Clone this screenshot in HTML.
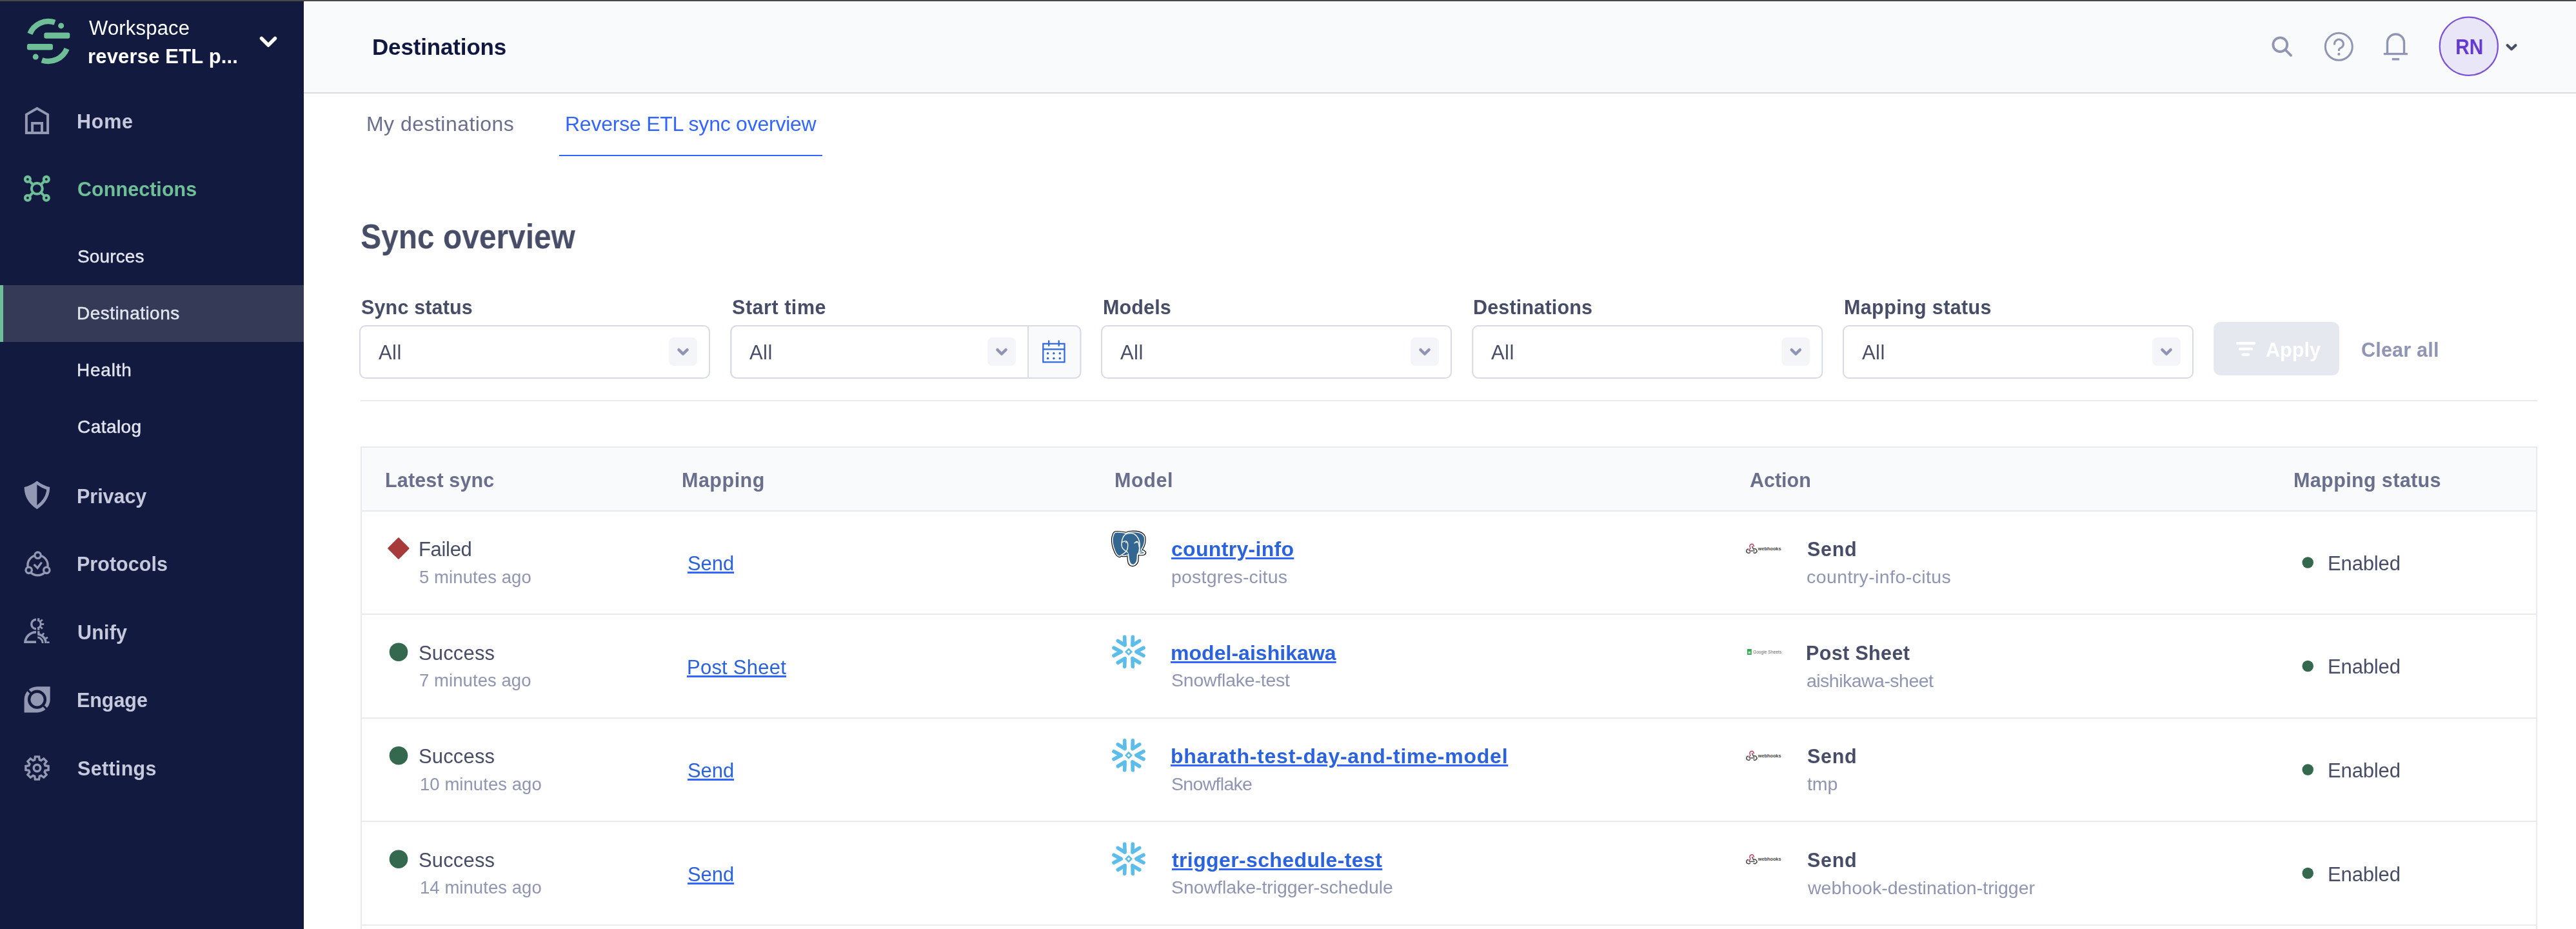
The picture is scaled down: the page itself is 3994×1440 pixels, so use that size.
<!DOCTYPE html>
<html><head><meta charset="utf-8"><title>Destinations</title>
<style>
html,body{margin:0;padding:0}
body{width:3994px;height:1440px;overflow:hidden;position:relative;background:#fff;font-family:"Liberation Sans",sans-serif}
.t{position:absolute;white-space:nowrap;will-change:transform}
svg.bg{position:absolute;left:0;top:0}
</style></head><body>
<svg class="bg" width="3994" height="1440" viewBox="0 0 3994 1440"><rect x="0" y="0" width="3994" height="1440" fill="#FFFFFF"/><rect x="471" y="2" width="3523" height="141" fill="#F9FAFC"/><rect x="471" y="143" width="3523" height="2" fill="#D8DAE5"/><rect x="0" y="2" width="471" height="1438" fill="#121A3F"/><rect x="0" y="0" width="3994" height="2" fill="#474747"/><rect x="867" y="240" width="408" height="2" fill="#3366FF"/><rect x="0" y="442" width="471" height="88" fill="#353B57"/><rect x="0" y="442" width="5" height="88" fill="#6EBF97"/><g fill="none" stroke="#6EBF97" stroke-width="8.5"><path d="M46.40,52.44 A30.85,30.85 0 0 1 85.04,34.83"/><path d="M103.60,75.56 A30.85,30.85 0 0 1 64.96,93.17"/></g><g fill="#6EBF97"><rect x="68.3" y="50.5" width="40" height="9.2" rx="3"/><rect x="41.9" y="68.1" width="40.1" height="9.3" rx="3"/><circle cx="94.7" cy="39.9" r="4.5"/><circle cx="55.2" cy="88.1" r="4.5"/></g><polyline points="405.5,59.5 416,70 426.5,59.5" fill="none" stroke="#FFFFFF" stroke-width="5.5" stroke-linecap="round" stroke-linejoin="round"/><g fill="none" stroke="#9398B3" stroke-width="4"><path d="M40.9,206 V177.6 L57.4,168 L74.1,177.6 V206 Z"/><path d="M50.1,206 V191 H65 V206"/></g><g fill="none" stroke="#6EBF97" stroke-width="4.1"><circle cx="57.35" cy="292.35" r="8.45"/><circle cx="42.9" cy="277.9" r="4"/><circle cx="71.8" cy="277.9" r="4"/><circle cx="42.9" cy="306.8" r="4"/><circle cx="71.8" cy="306.8" r="4"/><path d="M45.8,280.8 L51.4,286.4 M68.9,280.8 L63.3,286.4 M45.8,303.9 L51.4,298.3 M68.9,303.9 L63.3,298.3"/></g><path fill="#9398B3" fill-rule="evenodd" d="M57.35,745.4 Q48,752.5 37.7,755.1 Q37.5,776 57.35,789.3 Q77.2,776 77.2,755.1 Q66.7,752.5 57.35,745.4 Z M57.35,751.2 L57.35,783.2 Q71,773 72.2,759 Q64,756 57.35,751.2 Z"/><g fill="none" stroke="#9398B3" stroke-width="3.4"><circle cx="58.5" cy="876.2" r="15.6"/></g><g fill="#121A3F" stroke="#9398B3" stroke-width="3.3"><circle cx="58.6" cy="860.7" r="4.7"/><circle cx="44.7" cy="883.8" r="4.7"/><circle cx="72.3" cy="883.8" r="4.7"/></g><polyline points="52.6,874.8 58.2,880.4 64.6,871.6" fill="none" stroke="#9398B3" stroke-width="3.3"/><g fill="#9398B3"><path d="M56.00,958.50 A9.0,9.0 0 0 0 56.00,976.50 L56.00,973.10 A5.6,5.6 0 0 1 56.00,961.90 Z"/><path d="M58.19,975.01 A7.6,7.6 0 0 0 58.19,959.99 L57.74,962.86 A4.7,4.7 0 0 1 57.74,972.14 Z"/><rect x="64.00" y="966.15" width="4.20" height="2.7" transform="rotate(-38 57 967.5)"/><rect x="64.00" y="966.15" width="4.20" height="2.7" transform="rotate(0 57 967.5)"/><rect x="64.00" y="966.15" width="4.20" height="2.7" transform="rotate(38 57 967.5)"/><rect x="58.1" y="958.3" width="3.2" height="2.6"/><rect x="58.1" y="974.2" width="3.2" height="2.6"/><path d="M56.00,978.00 A19.0,19.0 0 0 0 37.00,997.00 L40.80,997.00 A15.2,15.2 0 0 1 56.00,981.80 Z"/><rect x="39" y="993.3" width="17" height="3.7"/><path d="M67.80,997.00 A10.8,10.8 0 0 0 58.50,986.31 L58.09,989.28 A7.8,7.8 0 0 1 64.80,997.00 Z"/><path d="M72.80,997.00 A15.8,15.8 0 0 0 58.51,981.27 L58.18,984.76 A12.3,12.3 0 0 1 69.30,997.00 Z"/><rect x="58.1" y="978.2" width="3.4" height="5"/><rect x="72.00" y="995.60" width="4.20" height="2.8" transform="rotate(-55 57 997)"/><rect x="72.00" y="995.60" width="4.20" height="2.8" transform="rotate(-28 57 997)"/><rect x="73" y="994.4" width="3.6" height="2.6"/></g><path fill="#9398B3" d="M77.7,1064.2 V1084.3 A20.1,20.1 0 0 1 57.6,1104.4 H37.6 V1084.3 A20.1,20.1 0 0 1 57.7,1064.2 Z"/><circle cx="57.5" cy="1084.2" r="12.4" fill="none" stroke="#121A3F" stroke-width="4.4"/><path d="M37,1063.6 L47.5,1074.2 M67.5,1094.2 L78,1104.8" stroke="#121A3F" stroke-width="3.2"/><path d="M61.31,1177.90 L60.55,1172.90 L54.45,1172.90 L53.69,1177.90 L51.29,1178.89 L47.21,1175.90 L42.90,1180.21 L45.89,1184.29 L44.90,1186.69 L39.90,1187.45 L39.90,1193.55 L44.90,1194.31 L45.89,1196.71 L42.90,1200.79 L47.21,1205.10 L51.29,1202.11 L53.69,1203.10 L54.45,1208.10 L60.55,1208.10 L61.31,1203.10 L63.71,1202.11 L67.79,1205.10 L72.10,1200.79 L69.11,1196.71 L70.10,1194.31 L75.10,1193.55 L75.10,1187.45 L70.10,1186.69 L69.11,1184.29 L72.10,1180.21 L67.79,1175.90 L63.71,1178.89 Z" fill="none" stroke="#9398B3" stroke-width="3.4" stroke-linejoin="miter"/><circle cx="57.5" cy="1190.5" r="5.2" fill="none" stroke="#9398B3" stroke-width="3.5"/><g fill="none" stroke="#8F95B2" stroke-width="3.8" stroke-linecap="round"><circle cx="3535.3" cy="69.2" r="10.9"/><path d="M3544.5,78.4 L3552,85.9"/></g><g fill="none" stroke="#8F95B2" stroke-width="3"><circle cx="3626.3" cy="72.3" r="21"/><path d="M3619.5,69.6 V68.05 A6.95,6.95 0 1 1 3630.9,73.4 Q3626.4,75.6 3626.4,77.2 V78.9"/></g><circle cx="3626.4" cy="83.9" r="2.1" fill="#8F95B2"/><g fill="none" stroke="#8F95B2" stroke-width="3.4"><path d="M3701.5,82 V66 A13,13 0 0 1 3727.5,66 V82"/></g><rect x="3695.8" y="81.9" width="37.1" height="3.3" fill="#8F95B2"/><rect x="3708.8" y="90.1" width="11.3" height="3.4" fill="#8F95B2"/><circle cx="3827.8" cy="71.7" r="45.1" fill="#E8E6F7" stroke="#7B52D6" stroke-width="2.2"/><polyline points="3887.6,70.2 3894,76.3 3900.4,70.2" fill="none" stroke="#474D66" stroke-width="4.2" stroke-linecap="round" stroke-linejoin="round"/><rect x="558" y="505" width="542" height="81" rx="9" fill="#FFFFFF" stroke="#D8DAE5" stroke-width="2"/><rect x="1037" y="523" width="44" height="44" rx="8" fill="#F4F5F9"/><polyline points="1052.4,542.2 1059.0,548.6 1065.6,542.2" fill="none" stroke="#8F95B2" stroke-width="4.4" stroke-linecap="round" stroke-linejoin="round"/><rect x="1133.3" y="505" width="542" height="81" rx="9" fill="#FFFFFF" stroke="#D8DAE5" stroke-width="2"/><path d="M1594,505 H1666.3 A9,9 0 0 1 1675.3,514 V577 A9,9 0 0 1 1666.3,586 H1594 Z" fill="#F9FAFC"/><rect x="1133.3" y="505" width="542" height="81" rx="9" fill="none" stroke="#D8DAE5" stroke-width="2"/><rect x="1593" y="505" width="2" height="81" fill="#D8DAE5"/><rect x="1531" y="523" width="44" height="44" rx="8" fill="#F4F5F9"/><polyline points="1546.4,542.2 1553.0,548.6 1559.6,542.2" fill="none" stroke="#8F95B2" stroke-width="4.4" stroke-linecap="round" stroke-linejoin="round"/><g fill="none" stroke="#2E67DA" stroke-width="2.2"><rect x="1617.3" y="532.8" width="33.2" height="28.5"/><path d="M1617.3,541.4 H1650.5 M1626.2,527.6 V536.8 M1641.7,527.6 V536.8"/></g><g fill="#2E67DA"><circle cx="1624.6" cy="547.7" r="1.7"/><circle cx="1624.6" cy="555.5" r="1.7"/><circle cx="1633.9" cy="547.7" r="1.7"/><circle cx="1633.9" cy="555.5" r="1.7"/><circle cx="1643.3" cy="547.7" r="1.7"/><circle cx="1643.3" cy="555.5" r="1.7"/></g><rect x="1708" y="505" width="542" height="81" rx="9" fill="#FFFFFF" stroke="#D8DAE5" stroke-width="2"/><rect x="2187" y="523" width="44" height="44" rx="8" fill="#F4F5F9"/><polyline points="2202.4,542.2 2209.0,548.6 2215.6,542.2" fill="none" stroke="#8F95B2" stroke-width="4.4" stroke-linecap="round" stroke-linejoin="round"/><rect x="2283.3" y="505" width="542" height="81" rx="9" fill="#FFFFFF" stroke="#D8DAE5" stroke-width="2"/><rect x="2762.3" y="523" width="44" height="44" rx="8" fill="#F4F5F9"/><polyline points="2777.7,542.2 2784.3,548.6 2790.9,542.2" fill="none" stroke="#8F95B2" stroke-width="4.4" stroke-linecap="round" stroke-linejoin="round"/><rect x="2858" y="505" width="542" height="81" rx="9" fill="#FFFFFF" stroke="#D8DAE5" stroke-width="2"/><rect x="3337" y="523" width="44" height="44" rx="8" fill="#F4F5F9"/><polyline points="3352.4,542.2 3359.0,548.6 3365.6,542.2" fill="none" stroke="#8F95B2" stroke-width="4.4" stroke-linecap="round" stroke-linejoin="round"/><rect x="3432.5" y="499.5" width="194" height="82" rx="10" fill="#E6E8F0" stroke="#EAEBF1" stroke-width="1"/><g stroke="#FFFFFF" stroke-width="4.3" stroke-linecap="round"><path d="M3469,532.1 H3495.2 M3473.2,540.9 H3490.9 M3477.5,549.7 H3486.2"/></g><rect x="559" y="620" width="3375" height="2" fill="#E9EAF0"/><rect x="561" y="694" width="3371" height="97" fill="#F9FAFC"/><rect x="559" y="692" width="3375" height="2" fill="#E9EAF0"/><rect x="559" y="692" width="2" height="748" fill="#E9EAF0"/><rect x="3932" y="692" width="2" height="748" fill="#E9EAF0"/><rect x="559" y="791" width="3375" height="2" fill="#E9EAF0"/><rect x="559" y="951" width="3375" height="2" fill="#E9EAF0"/><rect x="559" y="1112" width="3375" height="2" fill="#E9EAF0"/><rect x="559" y="1272" width="3375" height="2" fill="#E9EAF0"/><rect x="559" y="1433" width="3375" height="2" fill="#E9EAF0"/><path d="M1726.10,829.70 C1726.70,827.95 1727.27,826.42 1728.40,825.60 C1729.53,824.78 1730.75,824.80 1732.90,824.80 C1735.05,824.80 1739.15,825.33 1741.30,825.60 C1743.45,825.87 1744.18,826.53 1745.80,826.40 C1747.42,826.27 1748.83,825.12 1751.00,824.80 C1753.17,824.48 1756.43,824.43 1758.80,824.50 C1761.17,824.57 1763.17,824.65 1765.20,825.20 C1767.23,825.75 1769.48,826.62 1771.00,827.80 C1772.52,828.98 1773.70,830.37 1774.30,832.30 C1774.90,834.23 1774.82,837.15 1774.60,839.40 C1774.38,841.65 1773.83,843.60 1773.00,845.80 C1772.17,848.00 1769.60,851.20 1769.60,852.60 C1769.60,854.00 1772.05,853.57 1773.00,854.20 C1773.95,854.83 1775.20,855.63 1775.30,856.40 C1775.40,857.17 1774.63,858.30 1773.60,858.80 C1772.57,859.30 1770.60,859.33 1769.10,859.40 C1767.60,859.47 1765.47,858.77 1764.60,859.20 C1763.73,859.63 1764.12,860.13 1763.90,862.00 C1763.68,863.87 1763.95,868.25 1763.30,870.40 C1762.65,872.55 1761.40,873.93 1760.00,874.90 C1758.60,875.87 1756.40,876.42 1754.90,876.20 C1753.40,875.98 1751.87,874.90 1751.00,873.60 C1750.13,872.30 1750.02,870.33 1749.70,868.40 C1749.38,866.47 1749.35,863.37 1749.10,862.00 C1748.85,860.63 1748.97,860.32 1748.20,860.20 C1747.43,860.08 1745.75,861.12 1744.50,861.30 C1743.25,861.48 1741.68,861.42 1740.70,861.30 C1739.72,861.18 1739.42,860.43 1738.60,860.60 C1737.78,860.77 1736.93,862.43 1735.80,862.30 C1734.67,862.17 1733.00,861.18 1731.80,859.80 C1730.60,858.42 1729.63,856.55 1728.60,854.00 C1727.57,851.45 1726.23,847.48 1725.60,844.50 C1724.97,841.52 1724.72,838.57 1724.80,836.10 C1724.88,833.63 1725.50,831.45 1726.10,829.70 Z" fill="none" stroke="#000" stroke-width="3.8" stroke-linejoin="round"/><path d="M1726.10,829.70 C1726.70,827.95 1727.27,826.42 1728.40,825.60 C1729.53,824.78 1730.75,824.80 1732.90,824.80 C1735.05,824.80 1739.15,825.33 1741.30,825.60 C1743.45,825.87 1744.18,826.53 1745.80,826.40 C1747.42,826.27 1748.83,825.12 1751.00,824.80 C1753.17,824.48 1756.43,824.43 1758.80,824.50 C1761.17,824.57 1763.17,824.65 1765.20,825.20 C1767.23,825.75 1769.48,826.62 1771.00,827.80 C1772.52,828.98 1773.70,830.37 1774.30,832.30 C1774.90,834.23 1774.82,837.15 1774.60,839.40 C1774.38,841.65 1773.83,843.60 1773.00,845.80 C1772.17,848.00 1769.60,851.20 1769.60,852.60 C1769.60,854.00 1772.05,853.57 1773.00,854.20 C1773.95,854.83 1775.20,855.63 1775.30,856.40 C1775.40,857.17 1774.63,858.30 1773.60,858.80 C1772.57,859.30 1770.60,859.33 1769.10,859.40 C1767.60,859.47 1765.47,858.77 1764.60,859.20 C1763.73,859.63 1764.12,860.13 1763.90,862.00 C1763.68,863.87 1763.95,868.25 1763.30,870.40 C1762.65,872.55 1761.40,873.93 1760.00,874.90 C1758.60,875.87 1756.40,876.42 1754.90,876.20 C1753.40,875.98 1751.87,874.90 1751.00,873.60 C1750.13,872.30 1750.02,870.33 1749.70,868.40 C1749.38,866.47 1749.35,863.37 1749.10,862.00 C1748.85,860.63 1748.97,860.32 1748.20,860.20 C1747.43,860.08 1745.75,861.12 1744.50,861.30 C1743.25,861.48 1741.68,861.42 1740.70,861.30 C1739.72,861.18 1739.42,860.43 1738.60,860.60 C1737.78,860.77 1736.93,862.43 1735.80,862.30 C1734.67,862.17 1733.00,861.18 1731.80,859.80 C1730.60,858.42 1729.63,856.55 1728.60,854.00 C1727.57,851.45 1726.23,847.48 1725.60,844.50 C1724.97,841.52 1724.72,838.57 1724.80,836.10 C1724.88,833.63 1725.50,831.45 1726.10,829.70 Z" fill="#336791" stroke="#FFF" stroke-width="1.5" stroke-linejoin="round"/><g fill="none" stroke="#FFF" stroke-width="1.4" stroke-linecap="round" stroke-linejoin="round"><path d="M1748.40,856.20 C1746.97,854.92 1741.20,851.85 1739.80,848.50 C1738.40,845.15 1739.22,839.42 1740.00,836.10 C1740.78,832.78 1742.45,830.18 1744.50,828.60 C1746.55,827.02 1749.92,826.72 1752.30,826.60 C1754.68,826.48 1756.75,826.63 1758.80,827.90 C1760.85,829.17 1763.22,831.75 1764.60,834.20 C1765.98,836.65 1766.78,839.80 1767.10,842.60 C1767.42,845.40 1766.75,848.70 1766.50,851.00 C1766.25,853.30 1765.75,855.50 1765.60,856.40"/><path d="M1740.20,840.20 C1741.13,839.95 1744.43,838.40 1745.80,838.70 C1747.17,839.00 1747.97,840.27 1748.40,842.00 C1748.83,843.73 1748.72,847.07 1748.40,849.10 C1748.08,851.13 1747.57,852.70 1746.50,854.20 C1745.43,855.70 1743.22,857.15 1742.00,858.10 C1740.78,859.05 1739.67,859.60 1739.20,859.90"/><path d="M1759.00,841.80 C1759.57,841.42 1761.42,839.63 1762.40,839.50 C1763.38,839.37 1764.27,839.75 1764.90,841.00 C1765.53,842.25 1765.80,844.73 1766.20,847.00 C1766.60,849.27 1767.12,853.33 1767.30,854.60"/><path d="M1749.40,858.10 C1749.57,859.60 1749.70,864.40 1750.40,867.10 C1751.10,869.80 1752.20,873.00 1753.60,874.30 C1755.00,875.60 1757.30,875.67 1758.80,874.90 C1760.30,874.13 1761.80,872.38 1762.60,869.70 C1763.40,867.02 1763.43,860.62 1763.60,858.80"/><path d="M1764.60,857.50 C1765.57,857.15 1768.77,855.63 1770.40,855.40 C1772.03,855.17 1774.03,855.63 1774.40,856.10 C1774.77,856.57 1774.13,857.78 1772.60,858.20 C1771.07,858.62 1766.43,858.53 1765.20,858.60"/></g><circle cx="1745.8" cy="840.9" r="0.9" fill="#FFF"/><circle cx="1762.6" cy="840.5" r="0.9" fill="#FFF"/><path d="M617.9,834.2 L633.6,850 L617.9,865.8 L602.2,850 Z" fill="#A73A3A" stroke="#A73A3A" stroke-width="2" stroke-linejoin="round"/><g fill="none" stroke-width="1.5"><path d="M2713.50,848.50 A3.2,3.2 0 1 1 2719.10,847.50" stroke="#C73A63"/><path d="M2714.40,848.80 L2711.50,853.50" stroke="#C73A63"/><path d="M2716.40,846.50 L2719.10,852.10" stroke="#4B4B4B"/><path d="M2711.90,853.90 H2720.70" stroke="#4B4B4B"/><path d="M2711.10,850.90 A3.2,3.2 0 1 0 2713.90,855.50" stroke="#4B4B4B"/><path d="M2718.70,851.50 A3.2,3.2 0 1 1 2718.50,856.30" stroke="#4B4B4B"/></g><text x="2725.8" y="852.8" font-family="Liberation Sans" font-size="7.4" font-weight="bold" fill="#3E3E3E" textLength="35.7" lengthAdjust="spacingAndGlyphs">webhooks</text><circle cx="3578.2" cy="872.0" r="8.75" fill="#35694F"/><g fill="none" stroke="#5CBDEB" stroke-width="5.6" stroke-linecap="round" stroke-linejoin="round"><polyline points="1773.03,1004.30 1761.80,1010.30 1773.03,1016.30"/><polyline points="1766.71,1027.25 1755.90,1020.52 1756.32,1033.25"/><polyline points="1743.68,1033.25 1744.10,1020.52 1733.29,1027.25"/><polyline points="1726.97,1016.30 1738.20,1010.30 1726.97,1004.30"/><polyline points="1733.29,993.35 1744.10,1000.08 1743.68,987.35"/><polyline points="1756.32,987.35 1755.90,1000.08 1766.71,993.35"/></g><path fill="#5CBDEB" fill-rule="evenodd" d="M1750,1004.3 L1756,1010.3 L1750,1016.3 L1744,1010.3 Z M1750,1007.9 L1752.4,1010.3 L1750,1012.6999999999999 L1747.6,1010.3 Z"/><circle cx="618" cy="1010.7" r="14.3" fill="#35694F"/><rect x="2709" y="1005.9" width="6.8" height="9" rx="0.6" fill="#34A853"/><rect x="2710.6" y="1009.9" width="3.6" height="3.2" fill="#BFE3C8"/><text x="2718" y="1012.5" font-family="Liberation Sans" font-size="7" fill="#6A6A6A" textLength="44" lengthAdjust="spacingAndGlyphs">Google Sheets</text><circle cx="3578.2" cy="1032.5" r="8.75" fill="#35694F"/><g fill="none" stroke="#5CBDEB" stroke-width="5.6" stroke-linecap="round" stroke-linejoin="round"><polyline points="1773.03,1164.80 1761.80,1170.80 1773.03,1176.80"/><polyline points="1766.71,1187.75 1755.90,1181.02 1756.32,1193.75"/><polyline points="1743.68,1193.75 1744.10,1181.02 1733.29,1187.75"/><polyline points="1726.97,1176.80 1738.20,1170.80 1726.97,1164.80"/><polyline points="1733.29,1153.85 1744.10,1160.58 1743.68,1147.85"/><polyline points="1756.32,1147.85 1755.90,1160.58 1766.71,1153.85"/></g><path fill="#5CBDEB" fill-rule="evenodd" d="M1750,1164.8 L1756,1170.8 L1750,1176.8 L1744,1170.8 Z M1750,1168.3999999999999 L1752.4,1170.8 L1750,1173.2 L1747.6,1170.8 Z"/><circle cx="618" cy="1171.2" r="14.3" fill="#35694F"/><g fill="none" stroke-width="1.5"><path d="M2713.50,1169.50 A3.2,3.2 0 1 1 2719.10,1168.50" stroke="#C73A63"/><path d="M2714.40,1169.80 L2711.50,1174.50" stroke="#C73A63"/><path d="M2716.40,1167.50 L2719.10,1173.10" stroke="#4B4B4B"/><path d="M2711.90,1174.90 H2720.70" stroke="#4B4B4B"/><path d="M2711.10,1171.90 A3.2,3.2 0 1 0 2713.90,1176.50" stroke="#4B4B4B"/><path d="M2718.70,1172.50 A3.2,3.2 0 1 1 2718.50,1177.30" stroke="#4B4B4B"/></g><text x="2725.8" y="1173.8000000000002" font-family="Liberation Sans" font-size="7.4" font-weight="bold" fill="#3E3E3E" textLength="35.7" lengthAdjust="spacingAndGlyphs">webhooks</text><circle cx="3578.2" cy="1193.0" r="8.75" fill="#35694F"/><g fill="none" stroke="#5CBDEB" stroke-width="5.6" stroke-linecap="round" stroke-linejoin="round"><polyline points="1773.03,1325.30 1761.80,1331.30 1773.03,1337.30"/><polyline points="1766.71,1348.25 1755.90,1341.52 1756.32,1354.25"/><polyline points="1743.68,1354.25 1744.10,1341.52 1733.29,1348.25"/><polyline points="1726.97,1337.30 1738.20,1331.30 1726.97,1325.30"/><polyline points="1733.29,1314.35 1744.10,1321.08 1743.68,1308.35"/><polyline points="1756.32,1308.35 1755.90,1321.08 1766.71,1314.35"/></g><path fill="#5CBDEB" fill-rule="evenodd" d="M1750,1325.3 L1756,1331.3 L1750,1337.3 L1744,1331.3 Z M1750,1328.8999999999999 L1752.4,1331.3 L1750,1333.7 L1747.6,1331.3 Z"/><circle cx="618" cy="1331.7" r="14.3" fill="#35694F"/><g fill="none" stroke-width="1.5"><path d="M2713.50,1330.00 A3.2,3.2 0 1 1 2719.10,1329.00" stroke="#C73A63"/><path d="M2714.40,1330.30 L2711.50,1335.00" stroke="#C73A63"/><path d="M2716.40,1328.00 L2719.10,1333.60" stroke="#4B4B4B"/><path d="M2711.90,1335.40 H2720.70" stroke="#4B4B4B"/><path d="M2711.10,1332.40 A3.2,3.2 0 1 0 2713.90,1337.00" stroke="#4B4B4B"/><path d="M2718.70,1333.00 A3.2,3.2 0 1 1 2718.50,1337.80" stroke="#4B4B4B"/></g><text x="2725.8" y="1334.3000000000002" font-family="Liberation Sans" font-size="7.4" font-weight="bold" fill="#3E3E3E" textLength="35.7" lengthAdjust="spacingAndGlyphs">webhooks</text><circle cx="3578.2" cy="1353.5" r="8.75" fill="#35694F"/></svg>
<div class="t" style="left:137.89px;top:28px;font-size:31px;line-height:31px;color:#FFFFFF;letter-spacing:0.196px">Workspace</div>
<div class="t" style="left:136.03px;top:72px;font-size:31px;line-height:31px;color:#FFFFFF;font-weight:bold;letter-spacing:0.174px">reverse ETL p...</div>
<div class="t" style="left:119.27px;top:173px;font-size:30.5px;line-height:30.5px;color:#C6C9DB;font-weight:bold;letter-spacing:0.755px">Home</div>
<div class="t" style="left:119.78px;top:278px;font-size:30.5px;line-height:30.5px;color:#6EBF97;font-weight:bold;letter-spacing:0.052px">Connections</div>
<div class="t" style="left:119.60px;top:384px;font-size:28px;line-height:28px;color:#E4E6EF;letter-spacing:0.127px;-webkit-text-stroke:0.45px #E4E6EF">Sources</div>
<div class="t" style="left:118.76px;top:472px;font-size:28px;line-height:28px;color:#E4E6EF;letter-spacing:0.462px;-webkit-text-stroke:0.45px #E4E6EF">Destinations</div>
<div class="t" style="left:119.16px;top:560px;font-size:28px;line-height:28px;color:#E4E6EF;letter-spacing:0.780px;-webkit-text-stroke:0.45px #E4E6EF">Health</div>
<div class="t" style="left:119.60px;top:648px;font-size:28px;line-height:28px;color:#E4E6EF;letter-spacing:0.443px;-webkit-text-stroke:0.45px #E4E6EF">Catalog</div>
<div class="t" style="left:119.27px;top:754px;font-size:30.5px;line-height:30.5px;color:#C6C9DB;font-weight:bold;letter-spacing:-0.040px">Privacy</div>
<div class="t" style="left:119.27px;top:859px;font-size:30.5px;line-height:30.5px;color:#C6C9DB;font-weight:bold;letter-spacing:0.031px">Protocols</div>
<div class="t" style="left:119.57px;top:965px;font-size:30.5px;line-height:30.5px;color:#C6C9DB;font-weight:bold;letter-spacing:0.171px">Unify</div>
<div class="t" style="left:119.27px;top:1070px;font-size:30.5px;line-height:30.5px;color:#C6C9DB;font-weight:bold;letter-spacing:-0.051px">Engage</div>
<div class="t" style="left:120.08px;top:1176px;font-size:30.5px;line-height:30.5px;color:#C6C9DB;font-weight:bold;letter-spacing:0.309px">Settings</div>
<div class="t" style="left:576.95px;top:55px;font-size:35px;line-height:35px;color:#101840;font-weight:bold;letter-spacing:-0.159px">Destinations</div>
<div class="t" style="left:3806.72px;top:57px;font-size:32.5px;line-height:32.5px;color:#6437CF;font-weight:bold;transform:scaleX(0.9160);transform-origin:2.28px 0">RN</div>
<div class="t" style="left:567.64px;top:176px;font-size:32px;line-height:32px;color:#696F8C;letter-spacing:0.467px">My destinations</div>
<div class="t" style="left:875.54px;top:176px;font-size:32px;line-height:32px;color:#3366FF;letter-spacing:-0.236px">Reverse ETL sync overview</div>
<div class="t" style="left:559.29px;top:340px;font-size:53.5px;line-height:53.5px;color:#474D66;font-weight:bold;transform:scaleX(0.8951);transform-origin:1.60px 0">Sync overview</div>
<div class="t" style="left:559.88px;top:461px;font-size:30.5px;line-height:30.5px;color:#474D66;font-weight:bold;letter-spacing:0.153px">Sync status</div>
<div class="t" style="left:1134.99px;top:461px;font-size:30.5px;line-height:30.5px;color:#474D66;font-weight:bold;letter-spacing:0.536px">Start time</div>
<div class="t" style="left:1709.87px;top:461px;font-size:30.5px;line-height:30.5px;color:#474D66;font-weight:bold;letter-spacing:0.147px">Models</div>
<div class="t" style="left:2284.36px;top:461px;font-size:30.5px;line-height:30.5px;color:#474D66;font-weight:bold;letter-spacing:0.187px">Destinations</div>
<div class="t" style="left:2858.86px;top:461px;font-size:30.5px;line-height:30.5px;color:#474D66;font-weight:bold;letter-spacing:0.376px">Mapping status</div>
<div class="t" style="left:586.60px;top:531px;font-size:31px;line-height:31px;color:#474D66;letter-spacing:0.425px">All</div>
<div class="t" style="left:1161.90px;top:531px;font-size:31px;line-height:31px;color:#474D66;letter-spacing:0.425px">All</div>
<div class="t" style="left:1736.60px;top:531px;font-size:31px;line-height:31px;color:#474D66;letter-spacing:0.425px">All</div>
<div class="t" style="left:2311.90px;top:531px;font-size:31px;line-height:31px;color:#474D66;letter-spacing:0.425px">All</div>
<div class="t" style="left:2886.60px;top:531px;font-size:31px;line-height:31px;color:#474D66;letter-spacing:0.425px">All</div>
<div class="t" style="left:3513.09px;top:527px;font-size:30.5px;line-height:30.5px;color:#FFFFFF;font-weight:bold;letter-spacing:0.057px">Apply</div>
<div class="t" style="left:3660.68px;top:527px;font-size:30.5px;line-height:30.5px;color:#8F95B2;font-weight:bold;letter-spacing:0.214px">Clear all</div>
<div class="t" style="left:596.76px;top:729px;font-size:30.5px;line-height:30.5px;color:#696F8C;font-weight:bold;letter-spacing:0.150px">Latest sync</div>
<div class="t" style="left:1057.46px;top:729px;font-size:30.5px;line-height:30.5px;color:#696F8C;font-weight:bold;letter-spacing:0.502px">Mapping</div>
<div class="t" style="left:1728.07px;top:729px;font-size:30.5px;line-height:30.5px;color:#696F8C;font-weight:bold;letter-spacing:0.581px">Model</div>
<div class="t" style="left:2713.09px;top:729px;font-size:30.5px;line-height:30.5px;color:#696F8C;font-weight:bold;letter-spacing:-0.022px">Action</div>
<div class="t" style="left:3556.26px;top:729px;font-size:30.5px;line-height:30.5px;color:#696F8C;font-weight:bold;letter-spacing:0.376px">Mapping status</div>
<div class="t" style="left:649.12px;top:836px;font-size:31px;line-height:31px;color:#474D66;letter-spacing:-0.316px">Failed</div>
<div class="t" style="left:650.20px;top:881px;font-size:27.5px;line-height:27.5px;color:#8F95B2;letter-spacing:0.083px">5 minutes ago</div>
<div class="t" style="left:1065.95px;top:858px;font-size:31px;line-height:31px;color:#2B63DC;letter-spacing:-0.073px;text-decoration:underline;text-decoration-color:#3366FF;text-decoration-thickness:3px;text-underline-offset:2px">Send</div>
<div class="t" style="left:1815.82px;top:835px;font-size:32px;line-height:32px;color:#2B63DC;font-weight:bold;letter-spacing:0.309px;text-decoration:underline;text-decoration-color:#3366FF;text-decoration-thickness:3px;text-underline-offset:2px">country-info</div>
<div class="t" style="left:1816.21px;top:880px;font-size:28.5px;line-height:28.5px;color:#8F95B2;letter-spacing:0.198px">postgres-citus</div>
<div class="t" style="left:2801.68px;top:836px;font-size:30.5px;line-height:30.5px;color:#474D66;font-weight:bold;letter-spacing:0.675px">Send</div>
<div class="t" style="left:2801.46px;top:880px;font-size:28.5px;line-height:28.5px;color:#8F95B2;letter-spacing:0.395px">country-info-citus</div>
<div class="t" style="left:3608.92px;top:858px;font-size:31px;line-height:31px;color:#474D66;letter-spacing:-0.138px">Enabled</div>
<div class="t" style="left:649.35px;top:997px;font-size:31px;line-height:31px;color:#474D66;letter-spacing:0.152px">Success</div>
<div class="t" style="left:649.92px;top:1041px;font-size:27.5px;line-height:27.5px;color:#8F95B2;letter-spacing:0.065px">7 minutes ago</div>
<div class="t" style="left:1065.12px;top:1019px;font-size:31px;line-height:31px;color:#2B63DC;letter-spacing:0.232px;text-decoration:underline;text-decoration-color:#3366FF;text-decoration-thickness:3px;text-underline-offset:2px">Post Sheet</div>
<div class="t" style="left:1814.86px;top:996px;font-size:32px;line-height:32px;color:#2B63DC;font-weight:bold;letter-spacing:0.037px;text-decoration:underline;text-decoration-color:#3366FF;text-decoration-thickness:3px;text-underline-offset:2px">model-aishikawa</div>
<div class="t" style="left:1816.17px;top:1040px;font-size:28.5px;line-height:28.5px;color:#8F95B2;letter-spacing:-0.227px">Snowflake-test</div>
<div class="t" style="left:2800.46px;top:997px;font-size:30.5px;line-height:30.5px;color:#474D66;font-weight:bold;letter-spacing:0.362px">Post Sheet</div>
<div class="t" style="left:2801.46px;top:1041px;font-size:28.5px;line-height:28.5px;color:#8F95B2;letter-spacing:-0.530px">aishikawa-sheet</div>
<div class="t" style="left:3608.92px;top:1018px;font-size:31px;line-height:31px;color:#474D66;letter-spacing:-0.138px">Enabled</div>
<div class="t" style="left:649.35px;top:1157px;font-size:31px;line-height:31px;color:#474D66;letter-spacing:0.152px">Success</div>
<div class="t" style="left:650.80px;top:1202px;font-size:27.5px;line-height:27.5px;color:#8F95B2;letter-spacing:0.054px">10 minutes ago</div>
<div class="t" style="left:1065.95px;top:1179px;font-size:31px;line-height:31px;color:#2B63DC;letter-spacing:-0.073px;text-decoration:underline;text-decoration-color:#3366FF;text-decoration-thickness:3px;text-underline-offset:2px">Send</div>
<div class="t" style="left:1814.86px;top:1156px;font-size:32px;line-height:32px;color:#2B63DC;font-weight:bold;letter-spacing:0.765px;text-decoration:underline;text-decoration-color:#3366FF;text-decoration-thickness:3px;text-underline-offset:2px">bharath-test-day-and-time-model</div>
<div class="t" style="left:1816.17px;top:1201px;font-size:28.5px;line-height:28.5px;color:#8F95B2;letter-spacing:-0.690px">Snowflake</div>
<div class="t" style="left:2801.68px;top:1157px;font-size:30.5px;line-height:30.5px;color:#474D66;font-weight:bold;letter-spacing:0.675px">Send</div>
<div class="t" style="left:2802.03px;top:1201px;font-size:28.5px;line-height:28.5px;color:#8F95B2;letter-spacing:-0.050px">tmp</div>
<div class="t" style="left:3608.92px;top:1179px;font-size:31px;line-height:31px;color:#474D66;letter-spacing:-0.138px">Enabled</div>
<div class="t" style="left:649.35px;top:1318px;font-size:31px;line-height:31px;color:#474D66;letter-spacing:0.152px">Success</div>
<div class="t" style="left:650.80px;top:1362px;font-size:27.5px;line-height:27.5px;color:#8F95B2;letter-spacing:0.054px">14 minutes ago</div>
<div class="t" style="left:1065.95px;top:1340px;font-size:31px;line-height:31px;color:#2B63DC;letter-spacing:-0.073px;text-decoration:underline;text-decoration-color:#3366FF;text-decoration-thickness:3px;text-underline-offset:2px">Send</div>
<div class="t" style="left:1816.78px;top:1317px;font-size:32px;line-height:32px;color:#2B63DC;font-weight:bold;letter-spacing:0.378px;text-decoration:underline;text-decoration-color:#3366FF;text-decoration-thickness:3px;text-underline-offset:2px">trigger-schedule-test</div>
<div class="t" style="left:1816.17px;top:1361px;font-size:28.5px;line-height:28.5px;color:#8F95B2;letter-spacing:-0.055px">Snowflake-trigger-schedule</div>
<div class="t" style="left:2801.68px;top:1318px;font-size:30.5px;line-height:30.5px;color:#474D66;font-weight:bold;letter-spacing:0.675px">Send</div>
<div class="t" style="left:2802.60px;top:1362px;font-size:28.5px;line-height:28.5px;color:#8F95B2;letter-spacing:0.015px">webhook-destination-trigger</div>
<div class="t" style="left:3608.92px;top:1340px;font-size:31px;line-height:31px;color:#474D66;letter-spacing:-0.138px">Enabled</div>
</body></html>
